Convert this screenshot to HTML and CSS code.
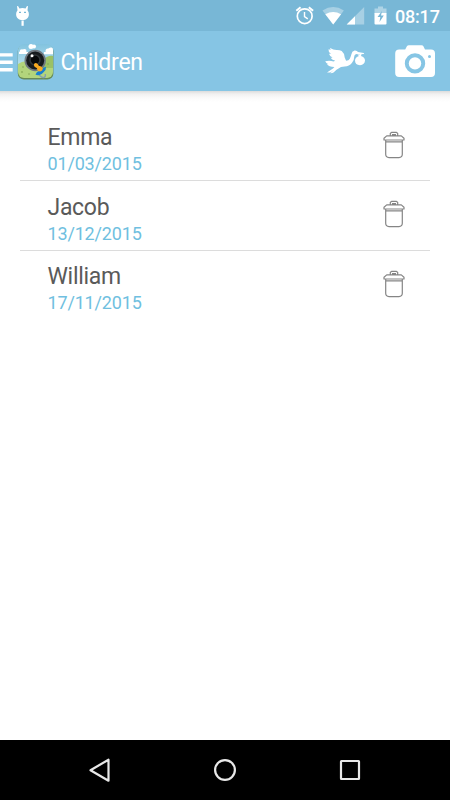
FILE: index.html
```html
<!DOCTYPE html>
<html lang="en">
<head>
<meta charset="utf-8">
<title>Children</title>
<link rel="stylesheet" href="styles.css">
</head>
<body>
<div class="screen">
  <div class="status">
    <svg class="debug" width="14" height="22" viewBox="15 5 14 22" fill="#fff">
      <path d="M17 6l1.200.2 1.200 2.200q3.100-.8 6.200 0l1.200-2.200L28 6l-.5 4.200q1.500 1.800 1.400 4c0 3.600-2.800 5.900-6.400 5.900S16.100 17.800 16.100 14.200q-.1-2.200 1.400-4z"/>
      <rect x="21.500" y="20.500" width="2.200" height="5.300"/>
      <path d="M19 12.300h2M24 12.300h2" stroke="#78b7d6" stroke-width="1.300"/>
    </svg>
    <div class="status-right">
      <svg class="alarm" width="20" height="20" viewBox="295 6 20 20" fill="none" stroke="#fff" stroke-width="1.700">
        <circle cx="304.700" cy="16.200" r="7.400"/>
        <path d="M304.500 12v4.600l3.300 2.200" stroke-width="1.400"/>
        <path d="M296.300 10.700l4.300-3.500M308.800 7.200l4.300 3.500" stroke-width="2"/>
      </svg>
      <svg class="signal" width="44" height="20" viewBox="322 6 44 20" fill="#fff">
        <path d="M322.500 10.500q10.700-6.800 21.400 0L333.200 24.500z" opacity=".35"/>
        <path d="M325.300 14.200q7.900-4.600 15.800 0L333.200 24.500z"/>
        <path d="M364.200 7v17.500h-17.500z" opacity=".35"/>
        <path d="M355 16.200v8.300h-8.300z"/>
      </svg>
      <svg class="battery" width="13" height="20" viewBox="374 6 13 20" fill="#fff">
        <path d="M374.500 8.500h3.500v-2h5v2h3.500v5h-12z" opacity=".4"/>
        <path d="M374.500 13h12v10.500q0 1-1 1h-10q-1 0-1-1z"/>
        <path d="M382 11l-4.500 6h2.800l-.8 5 4.300-6.500H381z" fill="#78b7d6"/>
      </svg>
      <span class="clock">08:17</span>
    </div>
  </div>

  <header class="appbar">
    <svg class="menu" width="13" height="20" viewBox="0 0 13 20" fill="#fff">
      <path d="M0 .2h12.700v3.400H0zM0 7.600h12.700v3.400H0zM0 15h12.700v3.400H0z"/>
    </svg>
    <svg class="logo" width="38" height="38" viewBox="17 43 38 38">
      <defs>
        <clipPath id="tile"><rect x="18" y="44" width="35" height="34" rx="6"/></clipPath>
        <linearGradient id="sky" x1="0" y1="0" x2="0" y2="1"><stop offset="0" stop-color="#82c3df"/><stop offset="1" stop-color="#b9e1ee"/></linearGradient>
      </defs>
      <rect x="17.800" y="45" width="35.600" height="34.500" rx="6" fill="#668b57"/>
      <g clip-path="url(#tile)">
        <path d="M18 44h35v23H18z" fill="url(#sky)"/>
        <path d="M18 64q7-5 13-1 10 1 22-7v23H18z" fill="#b2d57c"/>
        <path d="M43 60q5-5 10-4v12H43z" fill="#9bc165"/>
        <g fill="#fff"><circle cx="22" cy="51.500" r="2.300"/><circle cx="24.500" cy="51" r="2"/><path d="M19 52h9v2h-9z"/><circle cx="31" cy="46.500" r="2.500"/><circle cx="34" cy="46.500" r="2"/><circle cx="48" cy="51" r="2.500"/><circle cx="51" cy="50.500" r="3"/><path d="M44 52h9v2.200h-9z"/></g>
        <g fill="#789b49"><circle cx="23" cy="67" r=".7"/><circle cx="22" cy="72" r=".8"/><circle cx="29" cy="74" r=".7"/><circle cx="48" cy="64" r=".7"/></g>
      </g>
      <circle cx="35.200" cy="60.500" r="10.700" fill="#6f7880"/>
      <circle cx="35.200" cy="60.500" r="9" fill="#171b1e"/>
      <circle cx="35" cy="60" r="5.800" fill="#30363a"/>
      <circle cx="35" cy="60" r="4.200" fill="#07090b"/>
      <circle cx="32" cy="55.800" r="1.500" fill="#fff"/>
      <path d="M39 75c4 4 7 3 6.300-1" fill="none" stroke="#829faf" stroke-width="1.300"/>
      <path d="M35.500 74.500q1-3 4-3.700 3-3.500 6.500-4 .4 3-2.500 5.500-1.500 2.200-4.200 2.700-2.200.5-3.800-.5z" fill="#1680d0"/>
      <path d="M34.200 63.800q1.500-1.500 3.300 0l1.500 2.200q3-.5 3.900 2.600-.2 2.500-2.700 2.900-3-.1-3.200-3.300l-2.400-1.500q-1.200-1.500-.4-2.900z" fill="#f8a921"/>
    </svg>
    <h1 class="title">Children</h1>
    <div class="actions">
      <svg class="stork" width="42" height="28" viewBox="325 48 42 28" fill="#fff">
        <path d="M325.200 62.200q4.500-.8 8.300.2l1.700-.7q-3.600-.8-4.600-3 1 .2 1.900-.2-2.800-1-3.500-3.700h2q-3-2.200-2.500-4.600 1.200.6 2.200.4-.8-.9-.5-1.700 3 2 6.300 2.200 3.200-.1 5.200 1 2.600 2 3 6.500l1.400 3.200q2.700-.1 3.700-2.100 1.200-2.400 1.600-4.400.4-3 3.200-3.700 2.400-.2 3.400 1.500l5.700.9.500 1-4.900.3q-1.600.2-3.100-.3-2 .6-2 2.700 0 4-2.300 6.400-2.700 3.200-7.200 3.500l-3.700.3-4.500 2.800-3 2.900q-1 .6-3.300.7l4.200-3.900-3.300 2.500q-1.800.9-4.100.5l6-3.900 1.400-1.500q-5.500-.2-7.700-2.700h1.700q-2.400-1.200-3.200-3.100z"/>
        <path d="M361.500 54.500q0 1.700-.5 2.500 3.900 1 4 4.600-.3 4.300-5 4.600-4.900-.3-5-4.700.2-3.500 4-4.600-.8-.4-1.200-1.500l1.300.2z"/>
      </svg>
      <svg class="camera" width="42" height="34" viewBox="394 44 42 34">
        <path fill="#fff" fill-rule="evenodd" d="M399.200 49.500h6l1.700-3.200q.6-1.100 2-1.100h12.600q1.400 0 1.900 1.100l1.600 3.200h6q4 0 4 4V73q0 4-4 4h-31.800q-4 0-4-4V53.500q0-4 4-4zM415 53.200a10.200 10.200 0 1 0 0 20.400 10.200 10.200 0 1 0 0-20.400zM429.500 55a1.500 1.500 0 1 0 0 3 1.500 1.500 0 1 0 0-3z"/>
        <circle cx="415" cy="63.400" r="6.200" fill="#fff"/>
      </svg>
    </div>
  </header>

  <main class="content">
    <ul class="list">
      <li class="row">
        <div class="info"><span class="name">Emma</span><span class="date">01/03/2015</span></div>
        <svg class="trash" width="24" height="28" viewBox="0 0 24 28"><path d="M8.300 4.800V2.500L9.500 1.300h5l1.200 1.200v2.300M10 3.600h4M2 9V7.200L4.700 4.900h14.600L22 7.200V9zM3.700 9.500v13.800q.1 3.200 3.300 3.300h10q3.200-.1 3.300-3.300V9.500M4 10.900h16"/></svg>
      </li>
      <li class="row">
        <div class="info"><span class="name">Jacob</span><span class="date">13/12/2015</span></div>
        <svg class="trash" width="24" height="28" viewBox="0 0 24 28"><path d="M8.300 4.800V2.500L9.500 1.300h5l1.200 1.200v2.300M10 3.600h4M2 9V7.200L4.700 4.900h14.600L22 7.200V9zM3.700 9.500v13.800q.1 3.200 3.300 3.300h10q3.200-.1 3.300-3.300V9.500M4 10.900h16"/></svg>
      </li>
      <li class="row">
        <div class="info"><span class="name">William</span><span class="date">17/11/2015</span></div>
        <svg class="trash" width="24" height="28" viewBox="0 0 24 28"><path d="M8.300 4.800V2.500L9.500 1.300h5l1.200 1.200v2.300M10 3.600h4M2 9V7.200L4.700 4.900h14.600L22 7.200V9zM3.700 9.500v13.800q.1 3.200 3.300 3.300h10q3.200-.1 3.300-3.300V9.500M4 10.900h16"/></svg>
      </li>
    </ul>
  </main>

  <nav class="navbar">
    <svg width="26" height="26" viewBox="0 0 26 26"><path d="M21.500 2.700v21L3.500 13.200z"/></svg>
    <svg width="26" height="26" viewBox="0 0 26 26"><circle cx="13" cy="13" r="9.900"/></svg>
    <svg width="26" height="26" viewBox="0 0 26 26"><rect x="4" y="4" width="18" height="18" rx=".4"/></svg>
  </nav>
</div>
</body>
</html>
```

FILE: styles.css
```css
* { box-sizing: border-box; }
body {
  margin: 0;
  background: #fff;
  font-family: Roboto, "Liberation Sans", sans-serif;
}
svg { display: block; flex: none; }
.screen {
  display: flex;
  flex-direction: column;
  width: 450px;
  height: 800px;
  overflow: hidden;
}
.status {
  display: flex;
  justify-content: space-between;
  height: 31px;
  padding: 0 10px 0 15px;
  background: #78b7d6;
}
.debug { margin-top: 5px; }
.status-right { display: flex; align-items: flex-start; padding-top: 6px; }
.signal { margin-left: 7px; }
.battery { margin-left: 8px; }
.clock {
  width: 45px;
  margin-left: 8px;
  color: #fff;
  font-size: 18px;
  font-weight: 500;
  line-height: 21px;
  letter-spacing: -.2px;
  white-space: nowrap;
}
.appbar {
  display: flex;
  align-items: center;
  height: 60px;
  padding-right: 14px;
  background: #86c5e4;
}
.menu { margin-top: 3px; }
.logo { margin: 2px 0 0 4px; }
.title {
  margin: 3px 0 0 5.500px;
  color: #fff;
  font-size: 23px;
  font-weight: 400;
  line-height: 28px;
  letter-spacing: -.25px;
}
.actions { display: flex; align-items: center; margin-left: auto; }
.camera { margin-left: 27px; }
.content {
  flex: 1;
  padding: 20px 20px 0;
  background: linear-gradient(#dcdcdc, #f0f0f0 3px, #fafafa 7px, #fff 11px) no-repeat top / 100% 11px, #fff;
}
.list { margin: 0; padding: 0; list-style: none; }
.row {
  display: flex;
  justify-content: space-between;
  height: 69.500px;
  padding: 13px 24px 0 27.500px;
}
.row:first-child { height: 69px; }
.row + .row { border-top: 1px solid #dcdcdc; padding-top: 12.500px; }
.info { display: flex; flex-direction: column; }
.name { color: #5a5a5a; font-size: 23px; line-height: 28px; letter-spacing: -.3px; }
.date { color: #70bfe0; font-size: 18px; line-height: 24px; letter-spacing: -.17px; }
.trash {
  margin-top: 7px;
  fill: none;
  stroke: #858585;
  stroke-width: 1.200;
  stroke-linejoin: round;
}
.row + .row .trash { margin-top: 6.500px; }
.navbar {
  display: flex;
  justify-content: space-between;
  align-items: center;
  height: 60px;
  padding: 0 87px;
  background: #000;
}
.navbar svg { fill: none; stroke: #e8e8e8; stroke-width: 2.200; stroke-linejoin: round; }
```
